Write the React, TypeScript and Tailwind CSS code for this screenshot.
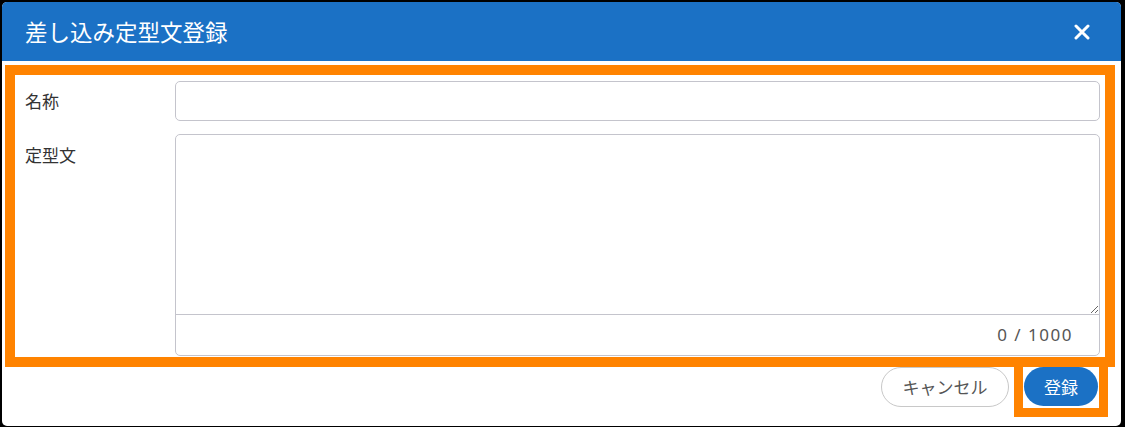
import { FC } from "react";

const jp = { fontFamily: '"Noto Sans CJK JP", "Noto Sans", sans-serif' };

const CloseIcon: FC = () => (
  <svg width="16" height="16" viewBox="0 0 16 16" fill="none">
    <path d="M2 2 L14 14 M14 2 L2 14" stroke="white" strokeWidth="3" strokeLinecap="round" />
  </svg>
);

export default function App() {
  return (
    <div className="min-h-[427px] w-[1125px] bg-black pt-[2px] pl-[2px]" style={jp}>
      <div className="relative flex h-[424px] w-[1119px] flex-col overflow-hidden rounded-[5px] bg-white">
        {/* header */}
        <div className="flex h-[59px] shrink-0 items-center justify-between bg-[#1b71c5] pl-[23px] pr-[29px]">
          <h1 className="text-[22.5px] leading-none text-white">差し込み定型文登録</h1>
          <button className="flex h-[20px] w-[20px] items-center justify-center">
            <CloseIcon />
          </button>
        </div>

        {/* body */}
        <div className="flex flex-col gap-[13px] pl-[23px] pr-[21px] pt-[20px]">
          <div className="flex items-center">
            <label className="w-[150px] shrink-0 text-[17px] text-[#333]">名称</label>
            <input
              type="text"
              className="h-[40px] flex-1 rounded-[5px] border border-[#c4c4cc] px-3 text-[16px] outline-none"
            />
          </div>
          <div className="flex items-start">
            <label className="w-[150px] shrink-0 pt-[9px] text-[17px] leading-[24px] text-[#333]">
              定型文
            </label>
            <div className="flex h-[222px] flex-1 flex-col overflow-hidden rounded-[5px] border border-[#c4c4cc]">
              <textarea className="h-[180px] w-full resize-y border-b border-[#c4c4cc] px-3 py-2 text-[16px] outline-none" />
              <div
                className="flex flex-1 items-center justify-end pr-[26px] text-[17px] tracking-[1.5px] text-[#555]"
                style={{ fontFamily: '"Noto Sans", sans-serif' }}
              >
                0 / 1000
              </div>
            </div>
          </div>
        </div>

        {/* footer */}
        <div className="flex justify-end gap-[15px] pr-[23px] pt-[11px]">
          <button className="h-[40px] w-[128px] rounded-full border border-[#c8c8c8] bg-white text-[17px] text-[#555]">
            キャンセル
          </button>
          <button className="h-[39px] w-[74px] rounded-full bg-[#1b71c5] text-[17px] text-white">
            登録
          </button>
        </div>

        {/* annotation overlays */}
        <div className="pointer-events-none absolute left-[3px] top-[63px] h-[302px] w-[1110px] border-[10px] border-[#ff8300]" />
        <div className="pointer-events-none absolute left-[1012px] top-[355px] h-[60px] w-[94px] border-[9px] border-[#ff8300]" />
      </div>
    </div>
  );
}
